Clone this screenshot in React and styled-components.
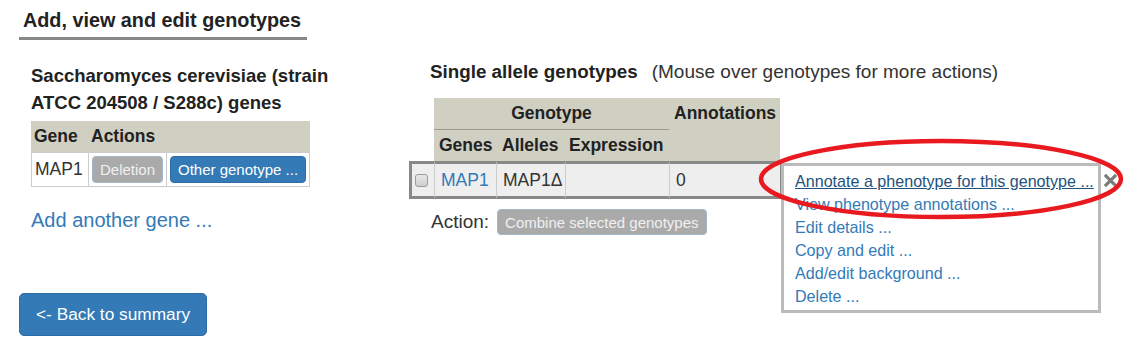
import React from 'react';
import styled, { createGlobalStyle } from 'styled-components';

const GlobalStyle = createGlobalStyle`
  * { box-sizing: border-box; }
  body {
    margin: 0;
    background: #fff;
    color: #333;
    font-family: "Liberation Sans", Arial, sans-serif;
  }
`;

const menuItems = [
  'Annotate a phenotype for this genotype ...',
  'View phenotype annotations ...',
  'Edit details ...',
  'Copy and edit ...',
  'Add/edit background ...',
  'Delete ...',
];

const App = () => {
  return (
    <Page>
      <GlobalStyle />
      <TitleWrap>
        <Title>Add, view and edit genotypes</Title>
      </TitleWrap>

      <Columns>
        <LeftCol>
          <SpeciesTitle>Saccharomyces cerevisiae (strain ATCC 204508 / S288c) genes</SpeciesTitle>
          <GeneTable>
            <colgroup>
              <Col $w={57} />
              <Col $w={78} />
              <Col $w={144} />
            </colgroup>
            <thead>
              <tr>
                <GeneTh>Gene</GeneTh>
                <GeneTh colSpan={2}>Actions</GeneTh>
              </tr>
            </thead>
            <tbody>
              <tr>
                <GeneTd>MAP1</GeneTd>
                <GeneTd>
                  <SmallButton $variant="disabled">Deletion</SmallButton>
                </GeneTd>
                <GeneTd $last>
                  <SmallButton $variant="primary">Other genotype ...</SmallButton>
                </GeneTd>
              </tr>
            </tbody>
          </GeneTable>
          <AddGene href="#">Add another gene ...</AddGene>
        </LeftCol>

        <RightCol>
          <SectionHead>
            <SectionTitle>Single allele genotypes</SectionTitle>
            <SectionNote>(Mouse over genotypes for more actions)</SectionNote>
          </SectionHead>

          <GenotypeTable>
            <colgroup>
              <Col $w={25} />
              <Col $w={62} />
              <Col $w={69} />
              <Col $w={104} />
              <Col $w={114} />
            </colgroup>
            <thead>
              <tr>
                <BlankTh />
                <HeadTh colSpan={3} $center $underline>Genotype</HeadTh>
                <HeadTh rowSpan={2} $top $lastCol>Annotations</HeadTh>
              </tr>
              <tr>
                <BlankTh />
                <HeadTh>Genes</HeadTh>
                <HeadTh $pad={6}>Alleles</HeadTh>
                <HeadTh $pad={4}>Expression</HeadTh>
              </tr>
            </thead>
            <tbody>
              <tr>
                <RowTd $first>
                  <CheckBox />
                </RowTd>
                <RowTd><GeneLink href="#">MAP1</GeneLink></RowTd>
                <RowTd>MAP1Δ</RowTd>
                <RowTd />
                <RowTd $lastCol>0</RowTd>
              </tr>
            </tbody>
          </GenotypeTable>

          <ActionRow>
            <ActionLabel>Action:</ActionLabel>
            <SmallButton $variant="disabled" $h={26}>Combine selected genotypes</SmallButton>
          </ActionRow>
        </RightCol>
      </Columns>

      <Footer>
        <BackButton>&lt;- Back to summary</BackButton>
      </Footer>

      <PopupMenu>
        {menuItems.map((item, i) => (
          <MenuLink key={item} href="#" $active={i === 0}>{item}</MenuLink>
        ))}
        <CloseIcon viewBox="0 0 16 16">
          <path d="M2 2 L14 14 M14 2 L2 14" stroke="#7b7b7b" strokeWidth="3.4" fill="none" />
        </CloseIcon>
      </PopupMenu>

      <Marker viewBox="0 0 1130 349">
        <ellipse cx="941" cy="179" rx="180" ry="38" fill="none" stroke="#e8191f" strokeWidth="4.5" />
      </Marker>
    </Page>
  );
};

export default App;

const Page = styled.div`
  position: relative;
  width: 1130px;
  height: 349px;
  overflow: hidden;
  padding-top: 9px;
`;

const TitleWrap = styled.div`
  padding-left: 19px;
`;

const Title = styled.h2`
  display: inline-block;
  margin: 0;
  padding: 0 6px 6px 4px;
  font-size: 19.8px;
  line-height: 22px;
  font-weight: bold;
  color: #222;
  border-bottom: 3px solid #888;
`;

const Columns = styled.div`
  display: flex;
  align-items: flex-start;
  margin-top: 18px;
  padding-left: 31px;
`;

const LeftCol = styled.div`
  width: 378px;
  padding-top: 3.5px;
  display: flex;
  flex-direction: column;
  align-items: flex-start;
`;

const SpeciesTitle = styled.h4`
  margin: 0;
  width: 320px;
  font-size: 18.5px;
  line-height: 27px;
  font-weight: bold;
  color: #222;
`;

const Col = styled.col`
  width: ${p => p.$w}px;
`;

const GeneTable = styled.table`
  margin-top: 5px;
  width: 279px;
  table-layout: fixed;
  border-collapse: separate;
  border-spacing: 0;
  font-size: 17.5px;
`;

const GeneTh = styled.th`
  height: 31px;
  padding: 0 3px;
  text-align: left;
  background: #d0d0c2;
  color: #222;
  font-weight: bold;
`;

const GeneTd = styled.td`
  height: 35px;
  padding: 0 3px;
  border: 1px solid #ccc;
  border-right: ${p => (p.$last ? '1px solid #ccc' : 'none')};
  color: #333;
  white-space: nowrap;
`;

const SmallButton = styled.button`
  display: inline-flex;
  align-items: center;
  height: ${p => p.$h || 27}px;
  padding: 0 7px;
  font-family: inherit;
  font-size: 15px;
  border-radius: 4px;
  white-space: nowrap;
  vertical-align: middle;
  cursor: pointer;
  color: ${p => (p.$variant === 'primary' ? '#fff' : '#f0f0f0')};
  background: ${p => (p.$variant === 'primary' ? '#337ab7' : '#aaa')};
  border: 1px solid ${p => (p.$variant === 'primary' ? '#2e6da4' : '#9fb6cc')};
`;

const AddGene = styled.a`
  margin-top: 19px;
  font-size: 20px;
  line-height: 28px;
  color: #337ab7;
  text-decoration: none;
`;

const RightCol = styled.div`
  display: flex;
  flex-direction: column;
`;

const SectionHead = styled.div`
  display: flex;
  align-items: baseline;
  gap: 14px;
  padding-left: 21px;
  line-height: 28px;
`;

const SectionTitle = styled.h4`
  margin: 0;
  font-size: 18.8px;
  font-weight: bold;
  color: #222;
`;

const SectionNote = styled.span`
  font-size: 19px;
  color: #333;
`;

const GenotypeTable = styled.table`
  margin-top: 12px;
  width: 374px;
  table-layout: fixed;
  border-collapse: separate;
  border-spacing: 0;
  font-size: 17.5px;
`;

const BlankTh = styled.th`
  padding: 0;
  background: transparent;
`;

const HeadTh = styled.th`
  height: ${p => (p.$underline ? 32 : 31)}px;
  padding: ${p => (p.$top ? '5px' : '0')} 0 0 ${p => (p.$center ? 0 : p.$pad || 5)}px;
  text-align: ${p => (p.$center ? 'center' : 'left')};
  vertical-align: ${p => (p.$top ? 'top' : 'middle')};
  background: #d0d0c2;
  background-clip: padding-box;
  color: #222;
  font-weight: bold;
  white-space: nowrap;
  border-bottom: ${p => (p.$underline ? '1px solid #9a9a90' : 'none')};
  border-right: ${p => (p.$lastCol ? '3px solid transparent' : 'none')};
`;

const RowTd = styled.td`
  height: 38px;
  padding: 0 0 0 ${p => (p.$first ? 3 : 6)}px;
  background: #eee;
  background-clip: padding-box;
  color: #333;
  white-space: nowrap;
  border-top: 3px solid #888;
  border-bottom: 3px solid #888;
  border-left: ${p => (p.$first ? '3px solid #888' : '1px solid #ccc')};
  border-right: ${p => (p.$lastCol ? '3px solid #888' : 'none')};
`;

const CheckBox = styled.span`
  display: block;
  width: 13px;
  height: 13px;
  margin-top: 1px;
  border: 1px solid #9a9a9a;
  border-radius: 3px;
  background: linear-gradient(#e8e8e8, #cfcfcf);
`;

const GeneLink = styled.a`
  color: #337ab7;
  text-decoration: none;
`;

const ActionRow = styled.div`
  display: flex;
  align-items: center;
  gap: 8px;
  margin-top: 10px;
  padding-left: 22px;
`;

const ActionLabel = styled.span`
  font-size: 19px;
  color: #333;
`;

const Footer = styled.div`
  margin-top: 58px;
  padding-left: 19px;
`;

const BackButton = styled.button`
  height: 43px;
  padding: 0 16px;
  font-family: inherit;
  font-size: 17.3px;
  color: #fff;
  background: #337ab7;
  border: 1px solid #2e6da4;
  border-radius: 5px;
  cursor: pointer;
`;

const PopupMenu = styled.div`
  position: absolute;
  left: 781px;
  top: 163px;
  width: 320px;
  height: 150px;
  padding: 4px 0 0 11px;
  background: #fff;
  border: 3px solid #bbb;
  z-index: 2;
`;

const MenuLink = styled.a`
  display: block;
  font-size: 16.1px;
  line-height: 23px;
  white-space: nowrap;
  color: ${p => (p.$active ? '#23527c' : '#337ab7')};
  text-decoration: ${p => (p.$active ? 'underline' : 'none')};
`;

const CloseIcon = styled.svg`
  position: absolute;
  left: 319px;
  top: 7px;
  width: 15px;
  height: 15px;
`;

const Marker = styled.svg`
  position: absolute;
  left: 0;
  top: 0;
  width: 1130px;
  height: 349px;
  pointer-events: none;
  z-index: 3;
`;
